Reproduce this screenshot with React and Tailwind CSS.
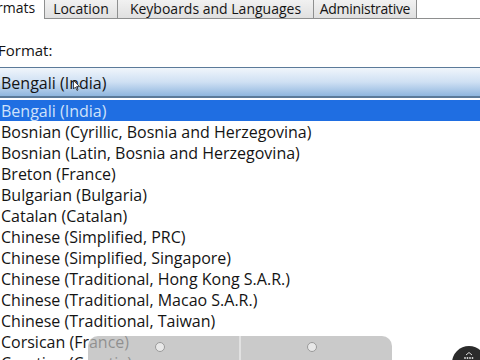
const items = [
  "Bengali (India)",
  "Bosnian (Cyrillic, Bosnia and Herzegovina)",
  "Bosnian (Latin, Bosnia and Herzegovina)",
  "Breton (France)",
  "Bulgarian (Bulgaria)",
  "Catalan (Catalan)",
  "Chinese (Simplified, PRC)",
  "Chinese (Simplified, Singapore)",
  "Chinese (Traditional, Hong Kong S.A.R.)",
  "Chinese (Traditional, Macao S.A.R.)",
  "Chinese (Traditional, Taiwan)",
  "Corsican (France)",
  "Croatian (Croatia)",
];

export default function App() {
  return (
    <div className="relative w-[480px] h-[360px] overflow-hidden bg-white text-[16px] text-[#141414] font-['Open_Sans',sans-serif]">
      {/* tabs */}
      <div className="flex h-[19px] items-end text-[14px] whitespace-nowrap">
        <div className="w-[44px] h-[19px] leading-[15px] -ml-[3px] pl-0">rmats</div>
        <div className="flex h-[21px] -mt-[2px] border-b border-[#8e8f8f] ml-[3px]">
          <div className="w-[74px] text-center leading-[19px] border border-b-0 border-[#8e8f8f] bg-gradient-to-b from-[#f2f2f2] to-[#e0e0e0]">Location</div>
          <div className="w-[196px] text-center leading-[19px] border border-l-0 border-b-0 border-[#8e8f8f] bg-gradient-to-b from-[#f2f2f2] to-[#e0e0e0]">Keyboards and Languages</div>
          <div className="w-[103px] text-center leading-[19px] border border-l-0 border-b-0 border-[#8e8f8f] bg-gradient-to-b from-[#f2f2f2] to-[#e0e0e0] tracking-[-0.3px]">Administrative</div>
        </div>
        <div className="flex-1 border-b border-[#8e8f8f]"></div>
      </div>

      <div className="mt-[21px] -ml-[2px] leading-[20px] text-[15px]">Format:</div>

      {/* combo box */}
      <div className="mt-[7px] h-[31px] border-t border-b-2 border-[#5b7a99] bg-gradient-to-b from-[#f0f5fb] via-[#cfe0f3] to-[#8fb6de] leading-[30px] pl-[1px]">
        Bengali (India)
      </div>

      {/* list */}
      <div className="mt-[2px]">
        {items.map((t, i) => (
          <div
            key={t}
            className={
              i === 0
                ? "h-[21px] leading-[23px] pl-[1px] bg-[#1f6ee2] text-[#cfe2fb]"
                : "h-[21px] leading-[23px] pl-[1px]"
            }
          >
            {t}
          </div>
        ))}
      </div>

      {/* mouse cursor */}
      <svg className="absolute left-[73px] top-[80px]" width="7" height="11" viewBox="0 0 7 11">
        <path d="M0.5 0.5 L0.5 9 L2.5 7 L4 10.5 L5 10 L3.6 6.6 L6.5 6.6 Z" fill="#fff" stroke="#222" strokeWidth="0.8" />
      </svg>

      {/* overlay panel */}
      <div className="absolute left-[88px] top-[336px] w-[304px] h-[30px] rounded-t-[10px] bg-[#b8b8b8]/75 flex">
        <div className="flex-1 flex justify-center pt-[6px] border-r-2 border-[#e6e6e6]/80">
          <div className="w-[10px] h-[10px] rounded-full bg-[#e8e8e8] border border-[#9a9a9a] ml-[-8px]"></div>
        </div>
        <div className="flex-1 flex justify-center pt-[6px]">
          <div className="w-[10px] h-[10px] rounded-full bg-[#e8e8e8] border border-[#9a9a9a] ml-[-10px]"></div>
        </div>
      </div>

      {/* corner button */}
      <div className="absolute left-[452px] top-[346px] w-[34px] h-[34px] rounded-full bg-[#2b2b2b] flex justify-center pt-[6px]">
        <svg width="14" height="8" viewBox="0 0 14 8">
          <path d="M4 3 L7 0.5 L10 3" fill="none" stroke="#ddd" strokeWidth="1" />
          <circle cx="3" cy="6" r="0.9" fill="#ddd" />
          <circle cx="5.5" cy="6" r="0.9" fill="#ddd" />
          <circle cx="8" cy="6" r="0.9" fill="#ddd" />
          <circle cx="10.5" cy="6" r="0.9" fill="#ddd" />
        </svg>
      </div>
    </div>
  );
}
